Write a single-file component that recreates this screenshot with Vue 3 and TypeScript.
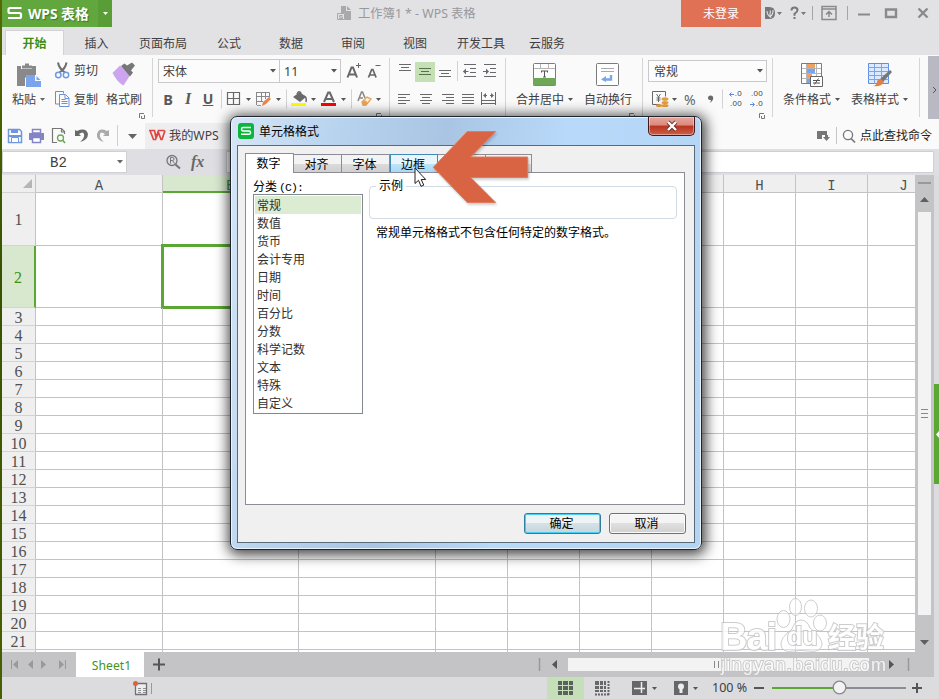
<script setup lang="ts">
interface Tab { label: string; width: number }
interface Column { name: string; width: number; active?: boolean }
interface Row { n: number; height: number; active?: boolean }

const tabs: Tab[] = [
  { label: '开始', width: 59 },
  { label: '插入', width: 65 },
  { label: '页面布局', width: 68 },
  { label: '公式', width: 64 },
  { label: '数据', width: 60 },
  { label: '审阅', width: 64 },
  { label: '视图', width: 60 },
  { label: '开发工具', width: 72 },
  { label: '云服务', width: 60 },
]

const columns: Column[] = [
  { name: 'A', width: 127 },
  { name: 'B', width: 136, active: true },
  { name: 'C', width: 137 },
  { name: 'D', width: 72 },
  { name: 'E', width: 72 },
  { name: 'F', width: 72 },
  { name: 'G', width: 72 },
  { name: 'H', width: 72 },
  { name: 'I', width: 72 },
  { name: 'J', width: 72 },
]

const rows: Row[] = Array.from({ length: 22 }, (_, i) => ({
  n: i + 1,
  height: i === 0 ? 53 : i === 1 ? 62 : 18,
  active: i === 1,
}))

const dialogTabs: string[] = ['数字', '对齐', '字体', '边框', '图案', '保护']
const categories: string[] = [
  '常规', '数值', '货币', '会计专用', '日期', '时间',
  '百分比', '分数', '科学记数', '文本', '特殊', '自定义',
]
</script>

<template>
  <div class="window">
    <div class="desktop-edge"></div>
    <div class="app">
      <header class="titlebar">
        <div class="brand">
          <svg width="26" height="27" viewBox="2 0 26 27"><path d="M21.500 8H10q-1.500 0-1.500 1.500v2q0 1.500 1.500 1.500H19.500q1.500 0 1.500 1.500v2q0 1.500-1.500 1.500H8" fill="none" stroke="#fff" stroke-width="2.200" /></svg>
          <span class="brand-name">WPS 表格</span>
          <svg class="brand-drop" width="14" height="27" viewBox="98 0 14 27"><path d="M103 12h5l-2.500 3z" fill="#fff" /></svg>
        </div>
        <div class="doc-title">
          <svg width="18" height="18" viewBox="336 4 18 18"><path d="M341 5h5v5h5v9h-6v-7h-4zM347 5l4 4h-4z" fill="#a9a9ab" /><path d="M337.500 12.500h7v6h-7zM342.500 14.500h-3v1.500h3v1.500h-3.500" fill="#e2e2e5" stroke="#a9a9ab" /></svg>
          <span>工作簿1 * - WPS 表格</span>
        </div>
        <button class="login">未登录</button>
        <svg width="173" height="27" viewBox="761 0 173 27" class="win-icons">
          <path d="M765 7h4.500q5.500 0 5.500 6t-5.500 6H765z" fill="#77777a" /><path d="M767 11q0 4 3.500 6q-1-3 0-6.500M770 17q3.500-3 3-7" fill="none" stroke="#e2e2e5" stroke-width="1.100" />
          <path d="M777 12h5l-2.500 3zM801 12h5l-2.500 3z" fill="#777779" />
          <path d="M791.500 10.500q0-3 3-3t3 2.500q0 2-3 3.800v2" fill="none" stroke="#777779" stroke-width="2" /><path d="M793.500 17h2v2h-2z" fill="#777779" />
          <path d="M812.500 6v14M847.500 6v14" stroke="#a5a5a8" />
          <path d="M822 6.500h14v13h-14zM822 9h14M829 17v-5M826 14.500l3-3 3 3" fill="none" stroke="#8a8a8c" stroke-width="1.500" />
          <path d="M858 14.500h12" stroke="#8a8a8c" stroke-width="2" />
          <path d="M886 9.500h10v7.500h-10z" fill="none" stroke="#8a8a8c" stroke-width="2.400" />
          <path d="M918.500 8.500l9 9M927.500 8.500l-9 9" stroke="#8a8a8c" stroke-width="2.400" />
        </svg>
      </header>

      <nav class="tabs">
        <div v-for="(t, i) in tabs" :key="t.label" class="tab" :class="{ active: i === 0 }" :style="{ width: t.width + 'px' }">{{ t.label }}</div>
      </nav>

      <section class="ribbon">
        <div class="group g1">
          <div class="line top">
            <svg width="50" height="27" viewBox="2 58 50 27">
              <path d="M17 66h4v3h11v-3h4v9h-8l-3 3v8h-8z" fill="#89898b" /><path d="M22 65.500h3v-2h4v2h3v3H22z" fill="#89898b" />
              <path d="M26 75h9v6h6v6H26z" fill="#7aa5ec" /><path d="M36.500 76l4 4h-4z" fill="#7aa5ec" />
            </svg>
            <svg width="22" height="27" viewBox="52 58 22 27">
              <path d="M58 62.500q1 6 7 10M66.500 62.500q-1 6-7 10" fill="none" stroke="#6e6e70" stroke-width="2" />
              <circle cx="58.300" cy="75" r="2.700" fill="none" stroke="#7298dd" stroke-width="1.500" /><circle cx="66" cy="75" r="2.700" fill="none" stroke="#7298dd" stroke-width="1.500" />
            </svg>
            <span class="w29">剪切</span>
            <svg width="47" height="27" viewBox="103 58 47 27">
              <path d="M112.500 73l7.500-7.500 10 10-6.500 10q-6-3-11-12.500z" fill="#cda4f0" />
              <path d="M121 66l3.500-2.500 2.500 2 5-3 3 3-4 5 2 2-3 4z" fill="#77777a" />
            </svg>
          </div>
          <div class="line">
            <span class="lbl-paste">粘贴</span>
            <svg width="38" height="28" viewBox="36 85 38 28">
              <path d="M40 98h5l-2.500 3z" fill="#666" />
              <path d="M60 104h-4.500V91.500h8v2" fill="none" stroke="#89898b" /><path d="M59.500 94.500h6l3.500 3.500v8.500h-9.500zM65 95v3.500h4M61.500 99.500h4M61.500 101.500h6M61.500 103.500h6" fill="none" stroke="#6c91dc" />
            </svg>
            <span class="w32">复制</span><span>格式刷</span>
          </div>
          <svg class="launch" width="6" height="6" viewBox="0 0 6 6"><path d="M.5 5V.5H5M5.500 2v3.500H2.500V3" fill="none" stroke="#777" /></svg>
        </div>

        <div class="group g2">
          <div class="line">
            <div class="combo font"><span>宋体</span><svg width="6" height="4"><path d="M0 0h6l-3 3.500z" fill="#555" /></svg></div>
            <div class="combo size"><span>11</span><svg width="6" height="4"><path d="M0 0h6l-3 3.500z" fill="#555" /></svg></div>
            <svg width="48" height="27" viewBox="341 58 48 27">
              <path d="M347.500 77.500l4-10h1.500l4 10M349 74.500h7" fill="none" stroke="#666668" stroke-width="2" /><path d="M358.500 63v5M356 65.500h5" stroke="#666668" />
              <path d="M368.500 77.500l3.200-8h1.200l3.200 8M369.500 75h6" fill="none" stroke="#666668" stroke-width="1.700" /><path d="M375.500 65.500h5" stroke="#666668" />
            </svg>
          </div>
          <div class="line">
            <b class="fmt">B</b><i class="fmt it">I</i><u class="fmt">U</u>
            <svg width="33" height="28" viewBox="218 85 33 28"><path d="M227.500 92.500h12v12h-12zM233.500 92v13M227 98.500h13" fill="none" stroke="#69696b" stroke-width="1.200" /><path d="M246 98h5l-2.500 3z" fill="#555" /><path d="M221.500 89.500v19" stroke="#d2d2d4" /></svg>
            <svg width="35" height="28" viewBox="251 85 35 28"><path d="M256.500 92.500h13v5M256.500 92v13M256 96.500h13M256 101.500h7M261.500 92v10M265.500 92v7" fill="none" stroke="#89898b" /><path d="M257 105.500h4" stroke="#ec8650" /><path d="M262 106l1-4 6-5 2 2-5 5z" fill="#ec8650" /><path d="M276 98h5l-2.500 3z" fill="#555" /></svg>
            <svg width="32" height="28" viewBox="286 85 32 28"><path d="M286.500 89.500v19" stroke="#d2d2d4" /><path d="M293 97l7-5 6 5-6 5z" fill="#69696b" /><path d="M297 94q2-4 4-1M304 96q3 1 2 6" fill="none" stroke="#69696b" stroke-width="1.500" /><path d="M291 103h15v3h-15z" fill="#ffff00" /><path d="M311 98h5l-2.500 3z" fill="#555" /></svg>
            <svg width="32" height="28" viewBox="318 85 32 28"><path d="M324 102l4.200-9.500h1.600l4.200 9.500M325.500 99h7" fill="none" stroke="#69696b" stroke-width="2" /><path d="M321 103h15v3h-15z" fill="#f00" /><path d="M341 98h5l-2.500 3z" fill="#555" /></svg>
            <svg width="39" height="28" viewBox="350 85 39 28"><path d="M351.500 89.500v19" stroke="#d2d2d4" /><path d="M358 101l3.500-9h1l2.500 6M359 98h4" fill="none" stroke="#8a8a8c" stroke-width="1.600" /><path d="M362 102l5-5 4 2-5 6h-3z" fill="#fff2df" stroke="#e9a35a" stroke-width="1.400" /><path d="M362 102l3-2 3 3-2 2.500h-3z" fill="#e9a35a" /><path d="M376 98h5l-2.500 3z" fill="#555" /></svg>
          </div>
          <svg class="launch" width="6" height="6" viewBox="0 0 6 6"><path d="M.5 5V.5H5M5.500 2v3.500H2.500V3" fill="none" stroke="#777" /></svg>
        </div>

        <div class="group g3">
          <div class="line">
            <svg width="25" height="27" viewBox="390 58 25 27"><path d="M399 64.500h12M401 67.500h8M399 70.500h12" stroke="#69696b" /></svg>
            <svg class="on" width="20" height="20" viewBox="415 61 20 20"><path d="M419 67.500h12M421 70.500h8M419 73.500h12" stroke="#55704c" /></svg>
            <svg width="24" height="27" viewBox="435 58 24 27"><path d="M439 70.500h12M441 73.500h8M439 76.500h12" stroke="#69696b" /><path d="M457.500 61v20" stroke="#d2d2d4" /></svg>
            <svg width="22" height="27" viewBox="459 58 22 27"><path d="M464 64.500h12M470 68.500h6M470 72.500h6M464 76.500h12M463.500 71.500h5" stroke="#69696b" /><path d="M463 71.500l3-3v6z" fill="#69696b" /></svg>
            <svg width="22" height="27" viewBox="481 58 22 27"><path d="M484 64.500h12M490 68.500h6M490 72.500h6M484 76.500h12M483 71.500h5" stroke="#69696b" /><path d="M489 71.500l-3-3v6z" fill="#69696b" /></svg>
          </div>
          <div class="line">
            <svg width="25" height="28" viewBox="390 85 25 28"><path d="M398 94.500h12M398 97.500h8M398 100.500h12M398 103.500h8" stroke="#69696b" /></svg>
            <svg width="22" height="28" viewBox="415 85 22 28"><path d="M420 94.500h12M422 97.500h8M420 100.500h12M422 103.500h8" stroke="#69696b" /></svg>
            <svg width="22" height="28" viewBox="437 85 22 28"><path d="M442 94.500h12M446 97.500h8M442 100.500h12M446 103.500h8" stroke="#69696b" /></svg>
            <svg width="20" height="28" viewBox="459 85 20 28"><path d="M462 94.500h12M462 97.500h12M462 100.500h12M462 103.500h12" stroke="#69696b" /></svg>
            <svg width="24" height="28" viewBox="479 85 24 28"><path d="M481.500 92v13M495.500 92v13M484 95.500h3M490 95.500h3M482 100.500h13M482 103.500h13" stroke="#69696b" /><path d="M483 95.500l3-2.500v5zM494 95.500l-3-2.500v5z" fill="#69696b" /></svg>
          </div>
        </div>

        <div class="group g4">
          <div class="line">
            <svg width="64" height="27" viewBox="506 58 64 27"><rect x="533.500" y="63.500" width="22" height="22" rx="1" fill="#fff" stroke="#7b7b7d" /><path d="M534 68.500h21M540.500 64v5M548.500 64v5" stroke="#b5b5b7" /><path d="M533 78h23v7.500h-23z" fill="#6ea757" /><path d="M541 71h7M544.500 71v6M543 77h3M541.500 71v1.500M547.500 71v1.500" stroke="#555" fill="none" /></svg>
            <svg width="72" height="27" viewBox="570 58 72 27"><rect x="596.500" y="63.500" width="22" height="22" rx="1" fill="#fff" stroke="#7b7b7d" /><path d="M601 68.500h13M601 71.500h13" stroke="#aaa" /><path d="M611 75v4.500h-6" stroke="#7aa5ec" stroke-width="2.400" fill="none" /><path d="M601 79.500l5-3.500v6z" fill="#7aa5ec" /></svg>
          </div>
          <div class="line pad10"><span>合并居中</span><svg width="20" height="28" viewBox="564 85 20 28"><path d="M568 98h5l-2.500 3z" fill="#555" /></svg><span>自动换行</span></div>
          <svg class="launch" width="6" height="6" viewBox="0 0 6 6"><path d="M.5 5V.5H5M5.500 2v3.500H2.500V3" fill="none" stroke="#777" /></svg>
        </div>

        <div class="group g5">
          <div class="line"><div class="combo number"><span>常规</span><svg width="6" height="4"><path d="M0 0h6l-3 3.500z" fill="#555" /></svg></div></div>
          <div class="line">
            <svg width="38" height="28" viewBox="643 85 38 28"><path d="M660 104.500h-7.500v-13h13v5M656.500 94l2 3 2-3M658.500 97v5M656.500 98h4M656.500 100h4" fill="none" stroke="#69696b" /><g fill="#e59c3e"><ellipse cx="665" cy="99" rx="3.500" ry="1.800" /><ellipse cx="665" cy="102.500" rx="3.500" ry="1.600" /><ellipse cx="665" cy="105.500" rx="3.500" ry="1.500" /><ellipse cx="659" cy="105.500" rx="3" ry="1.500" /></g><path d="M672 98h5l-2.500 3z" fill="#555" /></svg>
            <span class="pct">%</span>
            <svg width="23" height="28" viewBox="700 85 23 28"><path d="M708 98a2.600 2.600 0 1 1 5.200 0q0 3-3.700 5q1.500-1.500 1.500-3-3 0-3-2z" fill="#69696b" /><path d="M722.500 89.500v19" stroke="#d2d2d4" /></svg>
            <span class="dec"><span><svg width="5" height="5"><path d="M1 2.500h4M2.500 .5l-2 2 2 2" fill="none" stroke="#5d86dd" /></svg>.0</span><span>.00</span></span>
            <span class="dec"><span>.00</span><span><svg width="5" height="5"><path d="M0 2.500h4M2.500 .5l2 2-2 2" fill="none" stroke="#5d86dd" /></svg>.0</span></span>
          </div>
          <svg class="launch" width="6" height="6" viewBox="0 0 6 6"><path d="M.5 5V.5H5M5.500 2v3.500H2.500V3" fill="none" stroke="#777" /></svg>
        </div>

        <div class="group g6">
          <div class="line">
            <svg width="70" height="27" viewBox="773 58 70 27"><path d="M801.500 63.500h20v20h-20z" fill="#fff" stroke="#7b7b7d" /><path d="M802 68.500h19M802 73.500h19M802 78.500h19M806.500 64v19M816.500 64v19" stroke="#b5b5b7" /><path d="M807 64h8v4h-8zM807 74h5v4h-5z" fill="#f0a05f" /><path d="M807 69h8v4h-8zM807 79h3v4h-3z" fill="#7aa5ec" /><path d="M810.500 76.500h12v10h-12z" fill="#fff" stroke="#666" /><path d="M813 80.500h7M813 83h7M818.500 78.500l-4 6" stroke="#555" /></svg>
            <svg width="76" height="27" viewBox="843 58 76 27"><path d="M868.500 63.500h20v20h-20z" fill="#dce9ff" stroke="#5d8fe4" /><path d="M868 67.500h21M868 71.500h21M868 75.500h21M868 79.500h21M874.500 64v20M881.500 64v20" stroke="#7aa5ec" /><path d="M880 79l10-9 2 2-9 10z" fill="#777" /><path d="M873 86q4-1 4-4t4-3l3 3q-2 5-11 4z" fill="#e37f45" /></svg>
          </div>
          <div class="line pad10"><span>条件格式</span><svg width="20" height="28" viewBox="831 85 20 28"><path d="M835 98h5l-2.500 3z" fill="#555" /></svg><span>表格样式</span><svg width="16" height="28" viewBox="899 85 16 28"><path d="M903 98h5l-2.500 3z" fill="#555" /></svg></div>
        </div>
        <svg class="scroller" width="11" height="66" viewBox="928 56 11 66"><path d="M933 87l3 3-3 3" fill="none" stroke="#555" /></svg>
      </section>

      <section class="quick">
        <svg width="143" height="30" viewBox="2 119 143 30">
          <path d="M8.500 129.500h11l2 2v11h-13z" fill="#fff" stroke="#6f97df" stroke-width="1.500" /><path d="M11 129h7v4h-7zM8 135h14v2H8z" fill="#6f97df" /><path d="M11.500 137.500h7v5h-7z" fill="#fff" stroke="#6f97df" />
          <path d="M29 133h15v7H29z" fill="#8384c3" /><path d="M32.500 129.500h8v3.500h-8zM32.500 137.500h8v5h-8z" fill="#fff" stroke="#8384c3" stroke-width="1.500" />
          <path d="M57 142.500h-4.500v-14h9l3 3v2.500M61.500 129v3h3" fill="none" stroke="#777" stroke-width="1.200" /><circle cx="60.500" cy="138" r="3" fill="none" stroke="#6ea757" stroke-width="1.300" /><path d="M62.500 140l2.500 3" stroke="#6ea757" stroke-width="1.600" />
          <path d="M75 130v6h6l-2-2q4-3 5 0q1 4-4 8q8-2 8-8q-2-7-11-3z" fill="#69696b" /><path d="M109 130v6h-6l2-2q-4-3-5 0q-1 4 4 8q-8-2-7-8q2-7 10-3z" fill="#aaaaac" />
          <path d="M117.500 125v21" stroke="#cfcfd1" /><path d="M128 134h9l-4.500 5z" fill="#666" />
        </svg>
        <div class="cloud-tab">
          <svg width="24" height="26" viewBox="145 123 24 26"><path d="M149 130.500h5.500l1.500 7 2.500-7h6M150 130.500l3.500 9h2l3-7 2.500 7h1l3-9" fill="none" stroke="#e2453f" stroke-width="1.700" /></svg>
          <span>我的WPS</span>
        </div>
        <div class="grow"></div>
        <svg width="45" height="30" viewBox="815 119 45 30"><path d="M817 131h10v4h-5v4h-5z" fill="#77777a" /><path d="M823 137h2v-2h3v2h2l-3.500 4z" fill="#77777a" /><path d="M836.500 127v17" stroke="#c5c5c7" /><circle cx="848" cy="135" r="4.600" fill="none" stroke="#77777a" stroke-width="1.300" /><path d="M851 138.500l4 4" stroke="#77777a" stroke-width="1.700" /></svg>
        <span class="find">点此查找命令</span>
      </section>

      <section class="formula">
        <div class="namebox"><span>B2</span><svg width="6" height="4"><path d="M0 0h6l-3 3.500z" fill="#666" /></svg></div>
        <svg class="search" width="18" height="20" viewBox="165 152 18 20"><circle cx="172" cy="160.500" r="5" fill="none" stroke="#77777a" stroke-width="1.300" /><path d="M175.500 164.500l4.500 4" stroke="#77777a" stroke-width="2" /><path d="M170.500 163.500v-6h2q1.500 0 1.500 1.500t-1.500 1.500h-2M172.500 160.500l2 3" fill="none" stroke="#77777a" /></svg>
        <i class="fx">fx</i>
        <div class="input"></div>
      </section>

      <main class="sheet">
        <div class="grid">
          <div class="grid-row heads">
            <div class="corner"><svg width="10" height="10"><path d="M9 0v9H0z" fill="#b5b5b7" /></svg></div>
            <div v-for="c in columns" :key="c.name" class="colhead" :class="{ active: c.active }" :style="{ width: c.width + 'px' }">{{ c.name }}</div>
          </div>
          <div v-for="r in rows" :key="r.n" class="grid-row" :style="{ height: r.height + 'px' }">
            <div class="rowhead" :class="{ active: r.active }">{{ r.n < 22 ? r.n : '' }}</div>
            <div v-for="c in columns" :key="c.name" class="cell" :style="{ width: c.width + 'px' }">
              <div v-if="r.active && c.active" class="selection"></div>
            </div>
          </div>
        </div>
        <svg class="vscroll" width="19" height="477" viewBox="915 175 19 477"><path d="M918 183h13" stroke="#999" stroke-width="2" /><path d="M920 202l4.500-5 4.500 5z" fill="#5f5f61" /><path d="M918 212h13v403h-13z" fill="#f3f3f3" /><path d="M921 409.500h7M921 413.500h7M921 417.500h7" stroke="#888" /><path d="M920 640h9l-4.500 5z" fill="#5f5f61" /></svg>
        <div class="side"><svg width="5" height="100" viewBox="934 384 5 100"><path d="M939 431v7l-3-3.500z" fill="#fff" /></svg></div>
      </main>

      <div class="sheetbar">
        <svg width="74" height="25" viewBox="2 652 74 25"><path d="M11.500 660v9" stroke="#99999b" /><path d="M18 660v9l-5-4.500zM33 660v9l-5-4.500zM41 660v9l5-4.500zM59 660v9l5-4.500z" fill="#99999b" /><path d="M65.500 660v9" stroke="#99999b" /></svg>
        <div class="sheet-tab">Sheet1</div>
        <svg width="30" height="25" viewBox="144 652 30 25"><path d="M153 664.500h12M159 658.500v12" stroke="#555" stroke-width="2" /></svg>
        <div class="grow"></div>
        <svg width="30" height="25" viewBox="538 652 30 25"><path d="M539.500 658v13" stroke="#999" stroke-width="1.500" /><path d="M557 660v9l-5-4.500z" fill="#555" /></svg>
        <div class="hthumb"><i></i><i></i><i></i></div>
        <svg class="hend" width="65" height="25" viewBox="869 652 65 25"><path d="M889 660v9l5-4.500z" fill="#555" /><path d="M908.500 658v13" stroke="#999" stroke-width="1.500" /></svg>
      </div>

      <footer class="status">
        <svg width="545" height="22" viewBox="2 677 545 22"><path d="M135.500 683.500h11v11h-11z" fill="#eee" stroke="#707072" stroke-width="1.300" /><path d="M138 688.500h3M143 688.500h3M138 690.500h3M143 690.500h3M138 692.500h3M143 692.500h3" stroke="#909092" /><circle cx="135.500" cy="683.500" r="2.500" fill="#e0603c" /><path d="M151.500 683v11" stroke="#99999b" /></svg>
        <svg class="view-on" width="37" height="22" viewBox="547 677 37 22"><path d="M558 681h15v14h-15z" fill="#5b615b" /><path d="M558 685.500h15M558 690.500h15M562.500 681v14M568.500 681v14" stroke="#c5e0b9" /></svg>
        <svg width="38" height="22" viewBox="584 677 38 22"><path d="M595 681h11v11h-11z" fill="#67676a" /><path d="M595 685.500h11M595 689.500h11M599.500 681v11M603.500 681v11" stroke="#dcdcdf" /><path d="M608.500 681v14M595 694.500h14" stroke="#67676a" stroke-width="2" stroke-dasharray="2 1" /></svg>
        <svg width="40" height="22" viewBox="622 677 40 22"><path d="M632 681h15v14h-15z" fill="#67676a" /><path d="M634 688.500h11M641.500 682v11" stroke="#eee" stroke-width="1.500" /><path d="M652 687h5l-2.500 3z" fill="#555" /></svg>
        <svg width="50" height="22" viewBox="662 677 50 22"><path d="M674 681h14v14h-14z" fill="#67676a" /><circle cx="681" cy="686.500" r="3" fill="#eee" /><path d="M679.500 689h3v4h-3z" fill="#eee" /><path d="M693 687h5l-2.500 3z" fill="#555" /></svg>
        <span class="zoom">100 %</span>
        <svg width="189" height="22" viewBox="750 677 189 22"><path d="M754 688h10M912 688h10M917 683v10" stroke="#555" stroke-width="2" /><path d="M839 688h67" stroke="#8c8c92" stroke-width="2" /><path d="M772 688h67" stroke="#5ba733" stroke-width="2" /><circle cx="839.500" cy="687.500" r="6.300" fill="#f3f3f3" stroke="#88888a" stroke-width="1.300" /></svg>
      </footer>
    </div>

    <section class="dialog">
      <div class="dlg-title">
        <svg width="16" height="16" viewBox="0 0 16 16"><rect width="16" height="16" rx="3" fill="#0cb63c" /><path d="M13 4.500H5q-1.500 0-1.500 1.700T5 7.900h6q1.500 0 1.500 1.700T11 11.300H3" fill="none" stroke="#fff" stroke-width="1.500" /></svg>
        <span>单元格格式</span>
        <button class="close"><svg width="12" height="10" viewBox="0 0 12 10"><path d="M2 1l8 8M10 1L2 9" stroke="#6d3029" stroke-width="4" /><path d="M2 1l8 8M10 1L2 9" stroke="#fff" stroke-width="2.400" /></svg></button>
      </div>
      <div class="dlg-body">
        <div class="dlg-tabs">
          <div v-for="(t, i) in dialogTabs" :key="t" class="dtab" :class="{ active: i === 0, hot: i === 3 }">{{ i < 4 ? t : '' }}</div>
        </div>
        <div class="panel">
          <div class="left">
            <div class="list-label">分类<span>(C):</span></div>
            <ul class="list"><li v-for="(c, i) in categories" :key="c" :class="{ sel: i === 0 }">{{ c }}</li></ul>
          </div>
          <div class="right">
            <fieldset><legend>示例</legend></fieldset>
            <p>常规单元格格式不包含任何特定的数字格式。</p>
          </div>
        </div>
        <div class="actions"><button class="ok">确定</button><button>取消</button></div>
      </div>
    </section>

    <svg class="pointer" width="110" height="80" viewBox="424 127 110 80"><path d="M433.300 167.300L467.300 131.500h28.400L470.700 157h57v20.500h-57l25 25h-28.400z" fill="#d96444" stroke="#e07b5d" /></svg>
    <svg class="cursor" width="14" height="21" viewBox="0 0 14 21"><path d="M1 1v15.500l3.500-3.200 2.500 6 2.800-1.200-2.600-5.600h4.500z" fill="#fff" stroke="#222" /></svg>

    <svg class="watermark" width="176" height="84" viewBox="716 596 176 84">
      <g class="wm">
        <text x="720" y="650" class="wm-big" textLength="57">Bai</text>
        <ellipse cx="783.500" cy="619" rx="6.500" ry="8.500" /><ellipse cx="795.500" cy="607" rx="6" ry="8.500" /><ellipse cx="811" cy="608.500" rx="6.500" ry="8.500" /><ellipse cx="820" cy="623" rx="6.500" ry="8" />
        <path d="M801 620q6 0 9 8q13 10 12 17q-2 8-13 6q-8-1-16 0q-11 2-12-6q-1-7 11-16q3-9 9-9z" />
        <text x="787" y="645" class="wm-du">du</text>
        <text x="828" y="648" class="wm-cn">经验</text>
        <text x="721" y="671" class="wm-url" textLength="165">jingyan.baidu.com</text>
      </g>
    </svg>
  </div>
</template>

<style>
body { margin: 0; overflow: hidden; }
</style>

<style scoped>
.window { position: relative; width: 939px; height: 699px; display: flex; overflow: hidden; font: 12px/16px "Noto Sans", "Noto Sans CJK SC", sans-serif; color: #404042; background: #dcdcdf; white-space: nowrap; }
.window * { box-sizing: border-box; }
svg { display: block; flex: none; overflow: visible; }
button { font: inherit; padding: 0; margin: 0; border: 0; }
.grow { flex: 1; }
.desktop-edge { width: 2px; background: linear-gradient(#536b00, #375200 40%, #496000); flex: none; }
.app { width: 937px; display: flex; flex-direction: column; flex: none; }

.titlebar { height: 27px; background: #e2e2e5; display: flex; }
.brand { width: 110px; background: #62a73e; display: flex; color: #fff; }
.brand-name { width: 70px; font-weight: bold; font-size: 13.800px; line-height: 27px; text-shadow: 1px 1px 1px #3d7623; }
.brand-drop { background: #599d36; }
.doc-title { flex: 1; display: flex; align-items: center; padding-left: 224px; gap: 4px; color: #98989a; font-size: 12.300px; }
.login { width: 80px; background: #e07154; color: #fff; line-height: 26px; }
.win-icons { margin-right: 5px; }

.tabs { height: 28px; background: #e2e2e5; padding: 3px 0 0 3px; display: flex; }
.tab { text-align: center; line-height: 28px; flex: none; }
.tab.active { background: #fafafa; color: #3d8f13; font-weight: bold; border: 1px solid #d3d3d6; border-bottom: 0; line-height: 26px; }

.ribbon { height: 64px; background: #fafafa; display: flex; }
.group { height: 64px; padding-top: 3px; border-right: 1px solid transparent; border-image: linear-gradient(transparent 6%, #d5d5d7 6%, #d5d5d7 96%, transparent 96%) 1; flex: none; display: grid; grid-template-rows: 27px 28px 6px; }
.g1 { width: 151px; } .g2 { width: 237px; } .g3 { width: 116px; } .g4 { width: 137px; } .g5 { width: 130px; } .g6 { width: 147px; }
.line { display: flex; line-height: 28px; align-items: center; }
.line > span { flex: none; padding-top: 1px; }
.line.top > span { padding-top: 0; margin-top: -2px; }
.launch { justify-self: end; margin-right: 7px; }
.w29 { width: 29px; } .w32 { width: 32px; }
.line .lbl-paste { padding-left: 10px; }
.pad10 { padding-left: 10px; }
.combo { height: 24px; border: 1px solid #c9c9cc; background: #fcfcfc; display: flex; align-items: center; justify-content: space-between; padding: 0 3px 0 4px; line-height: 22px; align-self: flex-start; margin-top: 1px; flex: none; }
.combo span { padding-top: 1px; }
.font { width: 122px; margin-left: 5px; }
.size { width: 62px; margin-left: -1px; }
.size span { font-size: 12.500px; }
.number { width: 119px; margin-left: 5px; height: 22px; margin-top: 2px; padding-left: 5px; }
.fmt { width: 20px; text-align: center; font-size: 14px; color: #59595b; font-family: "Noto Sans", sans-serif; flex: none; }
.fmt:first-child { margin-left: 5px; font-size: 14.500px; margin-top: -1px; }
.it { font-family: "Liberation Serif", serif; font-weight: bold; font-size: 16px; }
u.fmt { font-weight: bold; margin-top: -1px; }
.on { background: #c5e0b4; }
.line .pct { width: 19px; padding-left: 3px; font-size: 14px; color: #666; }
.line .dec { width: 21px; padding: 0 2px 0 0; font: 8px/10px "Liberation Sans", sans-serif; display: flex; flex-direction: column; align-items: flex-end; color: #444; }
.dec span { display: flex; align-items: center; gap: 1px; letter-spacing: .3px; }
.scroller { background: #b9b9c3; margin: 1px 0 0 8px; }

.quick { height: 30px; background: #fafafa; display: flex; }
.cloud-tab { background: #eeeef0; width: 86px; height: 26px; margin-top: 4px; display: flex; line-height: 26px; font-size: 12.200px; }
.find { width: 79px; line-height: 33px; color: #222; }

.formula { height: 26px; background: #dfdfe3; display: flex; align-items: center; }
.namebox { width: 125px; height: 22px; border: 1px solid #d0d0d4; background: #fff; display: flex; align-items: center; padding: 0 3px 0 47px; justify-content: space-between; font: 14px "Liberation Mono", monospace; margin-top: -1px; }
.namebox span { padding-top: 2px; }
.search { margin-left: 38px; }
.fx { width: 40px; padding-left: 7px; font: italic bold 16px "Liberation Serif", serif; color: #68686a; margin-left: 1px; margin-right: 2px; }
.input { flex: 1; height: 22px; background: #fff; border: 1px solid #d0d0d4; margin: -1px 5px 0 0; }

.sheet { height: 477px; display: flex; }
.grid { width: 913px; overflow: hidden; background: #fff; flex: none; }
.grid-row { display: flex; }
.heads { height: 18px; }
.corner, .rowhead { width: 34px; flex: none; background: #efefef; border-right: 1px solid #c3c3c5; border-bottom: 1px solid #d3d3d5; }
.corner { display: flex; justify-content: flex-end; align-items: center; padding-right: 2px; }
.colhead { flex: none; height: 18px; background: #efefef; border-right: 1px solid #c3c3c5; border-bottom: 1px solid #c3c3c5; text-align: center; font: 14px/22px "Liberation Mono", monospace; color: #505052; }
.colhead.active { background: #d7e8cf; border-bottom: 2px solid #5ba733; color: #3d8f13; }
.rowhead { display: flex; align-items: center; justify-content: center; font: 16px/16px "Liberation Serif", serif; color: #505052; padding-top: 2px; }
.rowhead.active { background: #d7e8cf; border-right: 2px solid #5ba733; color: #3d8f13; }
.cell { flex: none; height: 100%; border-right: 1px solid #c3c3c5; border-bottom: 1px solid #c3c3c5; position: relative; }
.selection { position: absolute; inset: -2px -2px -2px -2px; border: 3px solid #5ba733; }
.vscroll { background: #c4c4c6; }
.side { width: 5px; padding-top: 209px; }
.side svg { background: #5ba733; }

.sheetbar { height: 25px; width: 932px; background: #c4c4c7; display: flex; }
.sheet-tab { width: 68px; background: #fff; color: #459618; text-align: center; line-height: 27px; padding-left: 3px; font-size: 12.200px; }
.hthumb { width: 301px; height: 13px; margin-top: 6px; background: #f3f3f3; display: flex; justify-content: center; align-items: center; gap: 3px; }
.hthumb i { width: 1px; height: 7px; background: #888; }
.status { height: 22px; background: #dcdcdf; display: flex; }
.view-on { background: #c5e0b9; }
.zoom { width: 38px; line-height: 22px; font-size: 12.500px; }

.dialog { position: absolute; left: 230px; top: 116px; width: 472px; height: 434px; border: 1px solid #20242b; border-radius: 7px; background: linear-gradient(100deg, #d6e6f7 0, #b7d3ee 20%, #a9c5e3 40%, #b9d9fa 62%, #b4d4f4 100%); box-shadow: inset 0 0 0 1px #e9f4ff, 1px 2px 13px 3px rgba(0,0,0,.72); padding: 0 7px 6px 6px; color: #000; }
.dlg-title { height: 28px; display: flex; align-items: center; gap: 5px; padding-left: 1px; }
.dlg-title span { flex: 1; padding-top: 1px; }
.close { width: 47px; height: 19px; align-self: flex-start; border: 1px solid #43191b; border-top: 0; border-radius: 0 0 5px 5px; background: linear-gradient(#e9a69c 0, #d98a7c 45%, #b93420 50%, #cb6048 100%); box-shadow: inset 0 0 0 1px rgba(255,255,255,.4); display: flex; align-items: center; justify-content: center; margin-right: -1px; }
.dlg-body { height: 398px; width: 458px; background: #f0f0f0; border: 1px solid #5a6a7d; padding: 7px 8px 0 7px; }
.dlg-tabs { display: flex; height: 19px; align-items: flex-end; }
.dtab { width: 48px; height: 18px; border: 1px solid #8b8c96; border-bottom: 0; border-left-width: 0; background: linear-gradient(#f3f3f3 50%, #dcdcdc 50%, #d0d0d0); text-align: center; line-height: 19px; padding-right: 2px; }
.dtab.active { width: 49px; height: 20px; margin-bottom: -1px; border-left-width: 1px; background: #fff; position: relative; line-height: 20px; }
.dtab.hot { background: linear-gradient(#e8f5fd 50%, #c2e4f8 50%, #a7d9f5); border-color: #4488b5; border-left-width: 1px; }
.dtab:last-child { width: 46px; }
.panel { width: 440px; height: 333px; background: #fff; border: 1px solid #8b8c96; padding: 5px 7px; display: flex; gap: 6px; }
.list-label { height: 16px; line-height: 18px; }
.list-label span { font-family: "Liberation Mono", monospace; font-size: 11.500px; letter-spacing: -.9px; margin-left: 2px; }
.list { width: 110px; height: 220px; margin: 0; padding: 1px; border: 1px solid #828790; list-style: none; color: #303030; }
.list li { height: 18px; line-height: 19px; padding-left: 2px; }
.list li.sel { background: #dcecd3; }
fieldset { width: 308px; height: 41px; margin: 0; padding: 0 0 0 6px; border: 1px solid #d0dbe4; border-radius: 4px; }
legend { padding: 0 3px; line-height: 16px; }
.right p { margin: 6px 0 0 7px; }
.actions { display: flex; gap: 8px; justify-content: flex-end; padding-top: 8px; }
.actions button { width: 77px; height: 21px; border: 1px solid #707070; border-radius: 3px; background: linear-gradient(#f4f4f4 50%, #e0e0e0 50%, #d0d0d0); line-height: 19px; box-shadow: inset 0 0 0 1px #fafafa; color: #000; padding-right: 2px; }
.actions .ok { border-color: #2d7e9f; box-shadow: inset 0 0 0 1px #48cdf5; background: linear-gradient(#eef3f5 50%, #d6e1e6 50%, #c5d6dd); }

.pointer { position: absolute; left: 424px; top: 127px; filter: drop-shadow(1px 2px 1px rgba(0,0,0,.18)); }
.cursor { position: absolute; left: 414px; top: 167px; }
.watermark { position: absolute; left: 716px; top: 596px; opacity: .8; }
.wm { fill: rgba(255,255,255,.6); stroke: #c0c0c2; stroke-width: 1; }
.wm text { paint-order: stroke; stroke-width: 2px; font-family: "Liberation Sans", "Noto Sans CJK SC", sans-serif; fill: #fff; }
.wm-big { font-size: 38px; font-weight: bold; }
.wm-du { font-size: 25px; font-weight: bold; }
.wm-cn { font-size: 28px; font-weight: bold; }
.wm-url { font-size: 18px; }
</style>
